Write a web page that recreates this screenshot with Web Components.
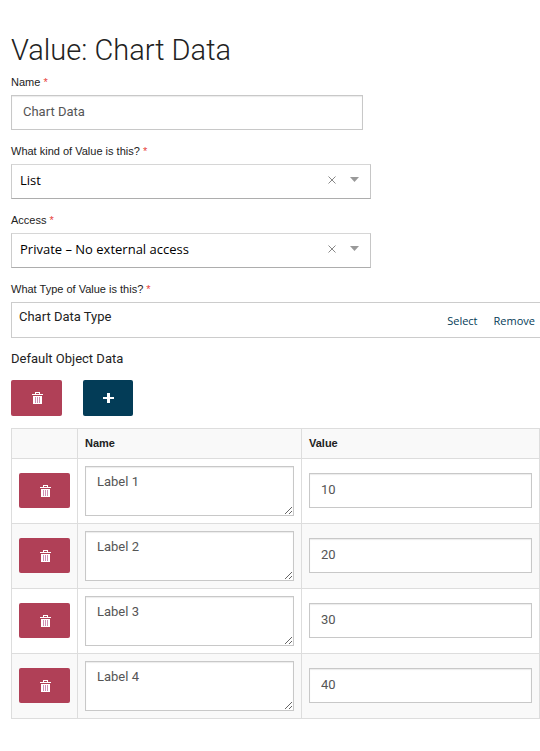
<!DOCTYPE html>
<html lang="en">
<head>
<meta charset="utf-8">
<title>Value: Chart Data</title>
<style>
  body { margin: 0; background: #fff; color: #222; font-family: "Liberation Sans", Arial, sans-serif; font-size: 13px; line-height: 16px; }
</style>
</head>
<body>
<value-editor></value-editor>

<script>
const TRASH = `<svg width="11" height="12" viewBox="0 0 11 12" aria-hidden="true"><path fill="#fff" fill-rule="evenodd" d="M3 0h5v2h3v1H0V2h3zM4 1v1h3V1zM1 4h9v8H1z"/><path d="M3.500 5v6M5.500 5v6M7.500 5v6" stroke="#cf8fb4" fill="none"/></svg>`;
const PLUS = `<svg width="12" height="12" viewBox="0 0 12 12" aria-hidden="true"><path fill="#fff" d="M4 1h3v4h4v2H7v4H4V7H0V5h4z"/></svg>`;

const CONTROL = `
  * { box-sizing: border-box; }
  input, textarea {
    display: block; width: 100%; margin: 0; padding: 0 11px;
    border: 1px solid #c8c8c8; border-radius: 0; background: #fff; color: #555;
    font: 13px/16px Roboto, sans-serif; box-shadow: inset 0 1px 1px #ececec; outline-offset: -1px;
  }
  input { height: 35px; padding-bottom: 2px; }
  textarea { height: 50px; padding-top: 7px; resize: both; overflow: hidden; }
`;
const LABEL = `
  label, .label { display: block; margin-bottom: 5px; font-size: 11px; line-height: 16px; color: #222; }
  .req { color: #e8413c; }
`;

function define(name, render) {
  customElements.define(name, class extends HTMLElement {
    connectedCallback() {
      if (this.shadowRoot) return;
      this.attachShadow({ mode: 'open' }).innerHTML = render(this);
    }
  });
}

define('text-field', el => `
  <style>:host { display: block; max-width: 352px; } ${CONTROL} ${LABEL}</style>
  <label for="c"><slot></slot> <span class="req">*</span></label>
  <input id="c" type="text" value="${el.getAttribute('value')}">
`);

define('select-field', el => `
  <style>
    :host { display: block; max-width: 360px; }
    * { box-sizing: border-box; }
    ${LABEL}
    .box { display: grid; grid-template-columns: 1fr 12px 32px; align-items: center; height: 35px;
      border: 1px solid #ccc; border-color: #d6d6d6 #c6c6c6 #adadad #ccc; }
    select { grid-area: 1 / 1 / 2 / 4; width: 100%; height: 33px; padding: 0 50px 4px 8px; border: 0; background: none;
      appearance: none; color: #000; font: 13px/16px "Open Sans", sans-serif; }
    button { grid-area: 1 / 2; z-index: 1; height: 18px; margin-bottom: 4px; padding: 0; border: 0; background: none; display: grid; place-items: center; }
    .caret { grid-area: 1 / 3; justify-self: center; pointer-events: none; margin-bottom: 4px; }
  </style>
  <label for="c"><slot></slot> <span class="req">*</span></label>
  <div class="box">
    <select id="c"><option>${el.getAttribute('value')}</option></select>
    <button type="button" aria-label="Clear"><svg width="8" height="8" viewBox="0 0 8 8"><path d="M.5.5l7 7M7.500.5l-7 7" stroke="#888" fill="none"/></svg></button>
    <svg class="caret" width="9" height="5" viewBox="0 0 9 5"><path d="M0 0h9L4.500 5z" fill="#999"/></svg>
  </div>
`);

define('type-field', () => `
  <style>
    :host { display: block; }
    ${LABEL}
    .box { display: flex; justify-content: space-between; height: 34px; border: 1px solid #ccc; border-right: 0; }
    .value { padding: 6px 7px; font: 13px/16px Roboto, sans-serif; color: #222; }
    nav { display: flex; gap: 16px; padding: 10px 5px 0 0; }
    a { font: 11px/16px "Open Sans", sans-serif; color: #033c57; text-decoration: none; }
  </style>
  <div class="label"><slot></slot> <span class="req">*</span></div>
  <div class="box"><span class="value"><slot name="value"></slot></span>
    <nav><a href="#select">Select</a><a href="#remove">Remove</a></nav></div>
`);

define('icon-button', el => {
  const add = el.getAttribute('kind') === 'add';
  return `
  <style>
    :host { display: block; }
    button { display: grid; place-items: center; box-sizing: border-box; width: ${add ? 50 : 51}px; height: 35px; padding: 1px 0 0 2px; border: 0;
      border-radius: 2px; background: ${add ? '#033c57' : '#b04057'}; cursor: pointer; }
    :host([large]) button { height: 36px; padding-top: 0; }
    svg { display: block; }
  </style>
  <button type="button" aria-label="${add ? 'Add row' : 'Delete'}">${add ? PLUS : TRASH}</button>`;
});

define('object-table', el => `
  <style>
    :host { display: block; }
    ${CONTROL}
    table { width: 100%; border-collapse: collapse; table-layout: fixed; }
    th, td { border: 1px solid #ddd; padding: 7px; vertical-align: middle; }
    th { height: 30px; padding: 0 7px 2px; background: #f9f9f9; text-align: left; font-size: 11px; line-height: 16px; color: #222; }
    td { height: 65px; }
    td.short { padding: 6px 7px 8px; }
    tr:nth-child(even) td { background: #f9f9f9; }
    .act { width: 66px; }
    .name { width: 224px; }
  </style>
  <table>
    <thead><tr><th class="act"></th><th class="name">Name</th><th>Value</th></tr></thead>
    <tbody>${JSON.parse(el.getAttribute('rows')).map(([n, v]) => `
      <tr><td class="short"><icon-button></icon-button></td>
      <td><textarea aria-label="Name">${n}</textarea></td>
      <td class="short"><input type="text" aria-label="Value" value="${v}"></td></tr>`).join('')}
    </tbody>
  </table>
`);

define('value-editor', () => `
  <style>
    :host { display: block; padding: 32px 0 32px 11px; }
    h1 { margin: 0 0 6px; font: 300 29px/36px Roboto, sans-serif; color: #222; }
    form { display: grid; gap: 13px; }
    h2 { margin: 13px 0 13px; font: 13px/16px Roboto, sans-serif; color: #222; }
    .actions { display: flex; gap: 21px; margin-bottom: 12px; }
  </style>
  <h1>Value: Chart Data</h1>
  <form>
    <text-field value="Chart Data">Name</text-field>
    <select-field value="List">What kind of Value is this?</select-field>
    <select-field value="Private – No external access">Access</select-field>
    <type-field>What Type of Value is this?<span slot="value">Chart Data Type</span></type-field>
  </form>
  <h2>Default Object Data</h2>
  <div class="actions"><icon-button large></icon-button><icon-button large kind="add"></icon-button></div>
  <object-table rows='[["Label 1",10],["Label 2",20],["Label 3",30],["Label 4",40]]'></object-table>
`);
</script>
</body>
</html>
